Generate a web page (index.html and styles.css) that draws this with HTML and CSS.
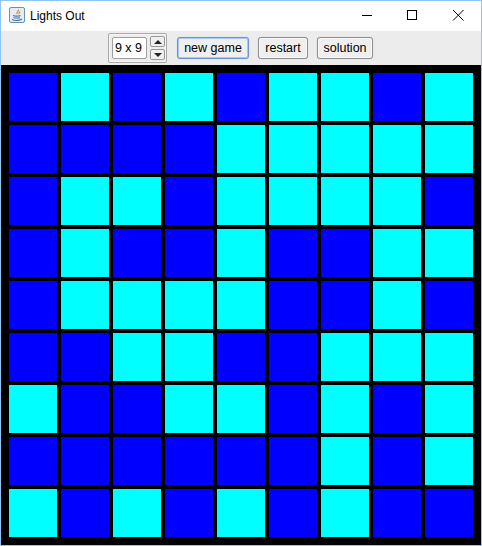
FILE: index.html
```html
<!DOCTYPE html>
<html lang="en">
<head>
    <meta charset="UTF-8">
    <meta name="viewport" content="width=device-width, initial-scale=1.0">
    <title>Lights Out</title>
    <link rel="stylesheet" href="styles.css">
</head>
<body>
    <div class="window">
        <div class="titlebar">
            <svg class="app-icon" width="16" height="16" viewBox="0 0 16 16">
                <rect x="0.5" y="0.5" width="15" height="15" rx="1.5" fill="#e4edf5" stroke="#6d8fae"/>
                <path d="M9.5 2.5c1 1.5-2.5 2.5-1.5 4.5M11 4.5c0 1.3-1.6 1.5-1.2 2.8" fill="none" stroke="#e08a3c" stroke-width="1.2"/>
                <path d="M4 8.5c2 .8 6 .8 7.5 0M4.500 10.500c2 .6 5 .6 6.500 0M3 12.500c3 1.300 7 1.300 10 -.5" fill="none" stroke="#3f74a3" stroke-width="1.100"/>
            </svg>
            <span class="title">Lights Out</span>
            <div class="window-controls">
                <svg class="control" width="46" height="30" viewBox="0 0 46 30"><path d="M19 14.500h10" stroke="#000" fill="none"/></svg>
                <svg class="control" width="46" height="30" viewBox="0 0 46 30"><rect x="18.500" y="9.500" width="9" height="9" stroke="#000" fill="none"/></svg>
                <svg class="control" width="46" height="30" viewBox="0 0 46 30"><path d="M18 9l10.500 10.500M28.500 9L18 19.500" stroke="#000" fill="none"/></svg>
            </div>
        </div>
        <div class="toolbar">
            <div class="spinner">
                <div class="spinner-value">9 x 9</div>
                <div class="spinner-arrows">
                    <div class="arrow-btn"><span class="arrow-up"></span></div>
                    <div class="arrow-btn"><span class="arrow-down"></span></div>
                </div>
            </div>
            <button class="button new-game">new game</button>
            <button class="button restart">restart</button>
            <button class="button solution">solution</button>
        </div>
        <div class="board">
            <div class="cell"></div><div class="cell on"></div><div class="cell"></div><div class="cell on"></div><div class="cell"></div><div class="cell on"></div><div class="cell on"></div><div class="cell"></div><div class="cell on"></div>
            <div class="cell"></div><div class="cell"></div><div class="cell"></div><div class="cell"></div><div class="cell on"></div><div class="cell on"></div><div class="cell on"></div><div class="cell on"></div><div class="cell on"></div>
            <div class="cell"></div><div class="cell on"></div><div class="cell on"></div><div class="cell"></div><div class="cell on"></div><div class="cell on"></div><div class="cell on"></div><div class="cell on"></div><div class="cell"></div>
            <div class="cell"></div><div class="cell on"></div><div class="cell"></div><div class="cell"></div><div class="cell on"></div><div class="cell"></div><div class="cell"></div><div class="cell on"></div><div class="cell on"></div>
            <div class="cell"></div><div class="cell on"></div><div class="cell on"></div><div class="cell on"></div><div class="cell on"></div><div class="cell"></div><div class="cell"></div><div class="cell on"></div><div class="cell"></div>
            <div class="cell"></div><div class="cell"></div><div class="cell on"></div><div class="cell on"></div><div class="cell"></div><div class="cell"></div><div class="cell on"></div><div class="cell on"></div><div class="cell on"></div>
            <div class="cell on"></div><div class="cell"></div><div class="cell"></div><div class="cell on"></div><div class="cell on"></div><div class="cell"></div><div class="cell on"></div><div class="cell"></div><div class="cell on"></div>
            <div class="cell"></div><div class="cell"></div><div class="cell"></div><div class="cell"></div><div class="cell"></div><div class="cell"></div><div class="cell on"></div><div class="cell"></div><div class="cell on"></div>
            <div class="cell on"></div><div class="cell"></div><div class="cell on"></div><div class="cell"></div><div class="cell on"></div><div class="cell"></div><div class="cell on"></div><div class="cell"></div><div class="cell"></div>
        </div>
    </div>
</body>
</html>
```

FILE: styles.css
```css
html, body {
    margin: 0;
    padding: 0;
}
body {
    font-family: "Liberation Sans", Arial, sans-serif;
    background-color: #ffffff;
}
.window {
    width: 482px;
    height: 546px;
    box-sizing: border-box;
    border: 1px solid #8fc5f7;
    display: flex;
    flex-direction: column;
}
.titlebar {
    height: 30px;
    background-color: #ffffff;
    display: flex;
    align-items: center;
    padding-left: 8px;
    flex-shrink: 0;
}
.app-icon {
    margin: 0 5px 2px 0;
}
.title {
    font-size: 12px;
    color: #000000;
    margin-bottom: 1px;
}
.window-controls {
    margin-left: auto;
    display: flex;
}
.toolbar {
    height: 34px;
    flex-shrink: 0;
    background-color: #ececec;
    display: flex;
    align-items: center;
    justify-content: center;
    font-size: 12.5px;
    padding-right: 1px;
    box-sizing: border-box;
}
.spinner {
    width: 59px;
    height: 30px;
    box-sizing: border-box;
    border: 1px solid #a9a9a9;
    border-radius: 2px;
    box-shadow: inset 0 0 0 1px #f6f6f6;
    display: flex;
    align-items: center;
    padding-left: 3px;
    margin-right: 10px;
}
.spinner-value {
    width: 35px;
    height: 22px;
    box-sizing: border-box;
    background-color: #ffffff;
    border: 1px solid #a0a0a0;
    border-radius: 2px;
    padding-right: 2px;
    text-align: center;
    line-height: 20px;
    color: #000000;
}
.spinner-arrows {
    margin-left: 3px;
    display: flex;
    flex-direction: column;
    gap: 2px;
}
.arrow-btn {
    width: 15px;
    height: 11px;
    box-sizing: border-box;
    border: 1px solid #9a9a9a;
    border-radius: 2px;
    background-color: #efefef;
    display: flex;
    align-items: center;
    justify-content: center;
}
.arrow-up {
    border-left: 4px solid transparent;
    border-right: 4px solid transparent;
    border-bottom: 4px solid #222222;
}
.arrow-down {
    border-left: 4px solid transparent;
    border-right: 4px solid transparent;
    border-top: 4px solid #222222;
}
.button {
    height: 22px;
    padding: 0;
    margin-right: 9px;
    font-family: inherit;
    font-size: 12.5px;
    line-height: 18px;
    color: #000000;
    background-color: #efefef;
    border: 1px solid #8f8f8f;
    border-radius: 3px;
    box-shadow: inset 0 0 0 1px #f8f8f8, 0 0 1px #b5b5b5;
}
.new-game {
    width: 72px;
    border-color: #6d96d8;
    box-shadow: inset 0 0 0 1px #a9c8f0, 0 0 1px #8fb4ea;
}
.restart {
    width: 50px;
}
.solution {
    width: 56px;
    margin-right: 0;
}
.board {
    flex: 1;
    background-color: #000000;
    padding: 8px;
    display: grid;
    grid-template-columns: repeat(9, 48px);
    grid-auto-rows: 48px;
    gap: 4px;
}
.cell {
    background-color: #0000ff;
}
.cell.on {
    background-color: #00ffff;
}
```
